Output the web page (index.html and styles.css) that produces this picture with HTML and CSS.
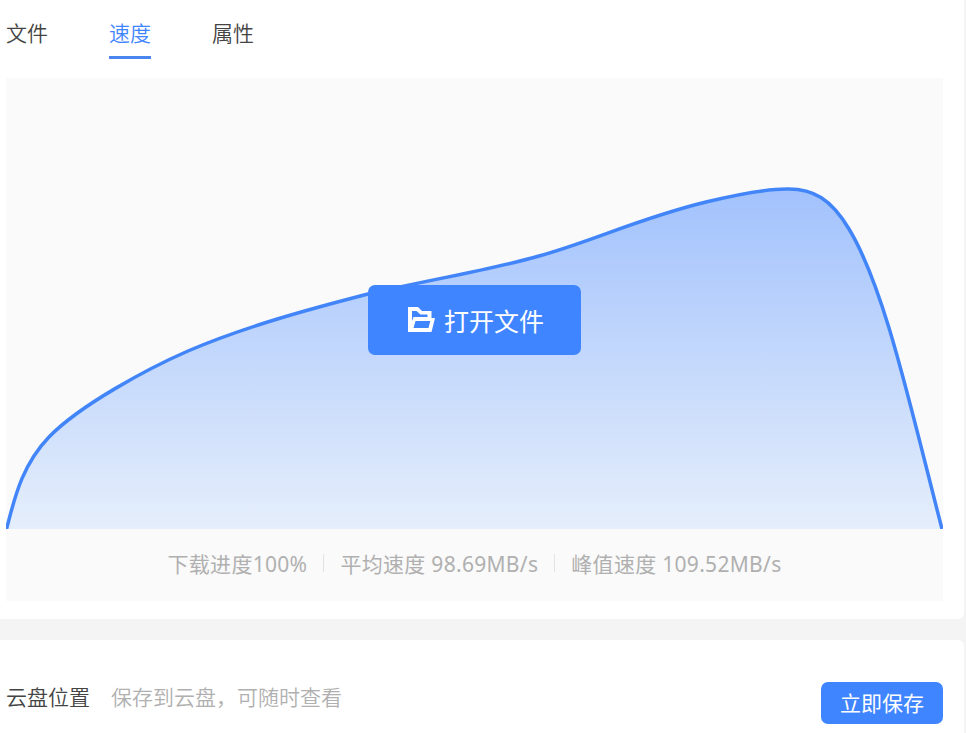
FILE: index.html
```html
<!DOCTYPE html>
<html lang="zh-CN">
<head>
  <meta charset="UTF-8">
  <title>下载详情</title>
  <meta name="viewport" content="width=device-width, initial-scale=1.0" />
  <link rel="stylesheet" href="styles.css">
</head>
<body>
  <div class="card detail">
    <div class="tabs">
      <div class="tab">文件</div>
      <div class="tab active">速度</div>
      <div class="tab">属性</div>
    </div>

    <div class="speed">
      <div class="chart">
        <svg class="curve" width="937" height="451" viewBox="6 78 937 451">
          <defs>
            <linearGradient id="fill" x1="0" y1="188" x2="0" y2="529" gradientUnits="userSpaceOnUse">
              <stop offset="0" stop-color="#a2c2fd" />
              <stop offset="1" stop-color="#e5eefb" />
            </linearGradient>
          </defs>
          <path fill="url(#fill)" d="M6.500 529C14 501 21 466 49 437C80 405 149 368 188 351C244 327 306 310 368 294C428 280 495 269 539 256C593 241 640 218 706 202C743 193 769 189 787 189C813 188.500 831 199 849 229C884 287 908 397 942 529Z" />
          <path class="line" d="M6.500 529C14 501 21 466 49 437C80 405 149 368 188 351C244 327 306 310 368 294C428 280 495 269 539 256C593 241 640 218 706 202C743 193 769 189 787 189C813 188.500 831 199 849 229C884 287 908 397 942 529" />
        </svg>
        <button class="open-btn">
          <svg class="folder" width="28" height="26" viewBox="0 0 28 26">
            <path fill-rule="evenodd" d="M1 0H11L15 4H24.500V11H28L24.500 25H1ZM5 4V14L6.500 10H20.500V7.500H13.500L9.500 4ZM8.500 14L6.500 21H21.500L23.300 14Z" />
          </svg>
          <span>打开文件</span>
        </button>
      </div>
      <div class="stats">
        <span>下载进度100%</span>
        <i></i>
        <span>平均速度 98.69MB/s</span>
        <i></i>
        <span>峰值速度 109.52MB/s</span>
      </div>
    </div>
  </div>

  <div class="card cloud">
    <span class="label">云盘位置</span>
    <span class="tip">保存到云盘，可随时查看</span>
    <button class="save-btn">立即保存</button>
  </div>
</body>
</html>
```
FILE: styles.css
```css
* {
  box-sizing: border-box;
}

body {
  margin: 0;
  height: 733px;
  overflow: hidden;
  background: #f4f4f4;
  font-family: "Noto Sans", "Noto Sans CJK SC", sans-serif;
  font-size: 21px;
  font-weight: 350;
  color: #444;
}

.card {
  width: 964px;
  background: #fff;
}

.detail {
  height: 619px;
  padding-left: 6px;
  border-radius: 0 0 6px 0;
}

.tabs {
  display: flex;
  gap: 61px;
  height: 78px;
}

.tab {
  height: 59px;
  padding-top: 18px;
  line-height: 30px;
}

.active {
  color: #3f85ff;
  border-bottom: 3px solid #4a86ee;
}

.speed {
  width: 937px;
  height: 523px;
  background: #fafafa;
}

.chart {
  position: relative;
  height: 451px;
}

.curve {
  display: block;
}

.line {
  fill: none;
  stroke: #4285f8;
  stroke-width: 3.5;
}

button {
  border: none;
  background: #3f85ff;
  color: #fff;
  font-family: inherit;
  font-weight: 400;
  padding: 0;
}

/* sits on top of the curve */
.open-btn {
  position: absolute;
  left: 362px;
  top: 207px;
  width: 213px;
  height: 70px;
  border-radius: 7px;
  display: flex;
  align-items: center;
  justify-content: center;
  gap: 9px;
  padding-left: 2px;
  font-size: 25px;
}

.folder {
  fill: #fff;
}

.stats {
  height: 72px;
  padding-bottom: 4px;
  display: flex;
  align-items: center;
  justify-content: center;
  gap: 16px;
  font-weight: 400;
  letter-spacing: 0.3px;
  color: #b0b0b0;
  white-space: nowrap;
}

.stats i {
  width: 1px;
  height: 18px;
  background: #e3e3e3;
}

.cloud {
  height: 110px;
  margin-top: 21px;
  padding: 42px 21px 0 6px;
  border-radius: 0 6px 0 0;
  display: flex;
  line-height: 30px;
}

.tip {
  margin-left: 21px;
  color: #b0b0b0;
}

.save-btn {
  width: 122px;
  height: 42px;
  margin-left: auto;
  padding-bottom: 2px;
  border-radius: 7px;
  font-size: 21px;
}
```
